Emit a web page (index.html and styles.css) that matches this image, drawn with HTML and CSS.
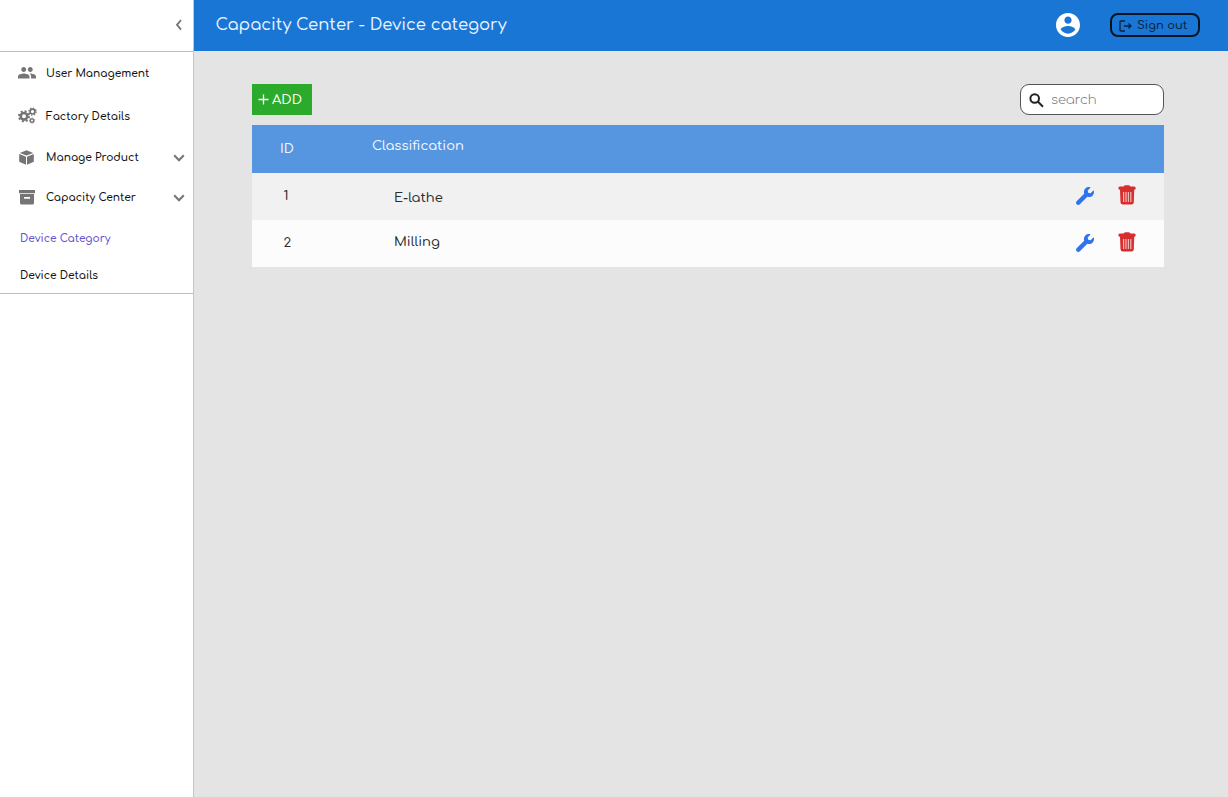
FILE: index.html
```html
<!DOCTYPE html>
<html lang="en">
<head>
<meta charset="utf-8">
<title>Capacity Center - Device category</title>
<link rel="stylesheet" href="styles.css">
</head>
<body>
<svg class="defs" width="0" height="0">
  <symbol id="wrench" viewBox="0 0 512 512"><path d="M507.73 109.1c-2.24-9.03-13.54-12.09-20.12-5.51l-74.36 74.36-67.88-11.31-11.31-67.88 74.36-74.36c6.62-6.62 3.43-17.9-5.66-20.16-47.38-11.74-99.55.91-136.58 37.93-39.64 39.64-50.55 97.1-34.05 147.2L18.74 402.76c-24.99 24.99-24.99 65.51 0 90.5 24.99 24.99 65.51 24.99 90.5 0l213.21-213.21c50.12 16.71 107.47 5.68 147.37-34.22 37.07-37.07 49.7-89.32 37.91-136.73z"/></symbol>
  <symbol id="trash" viewBox="0 0 18 20"><path d="M1.800 1.500H5.500Q6.500.3 7.500.3h3q1 0 2 1.200h3.700q1.500 0 1.500 1.500T16.200 4.900L15.800 17.300q0 2.200-2.200 2.200H4.800Q2.600 19.500 2.500 17.300L2 4.900Q.3 4.500.3 3T1.800 1.500z"/><path class="slots" d="M5.600 7v10M8 7v10M10.400 7v10M12.800 7v10"/></symbol>
  <symbol id="chevron" viewBox="0 0 12 8"><path d="M1.200 1.200 6 6.300 10.800 1.200"/></symbol>
</svg>
<div class="app">
  <aside class="sidebar">
    <div class="side-head"><svg class="collapse" viewBox="0 0 8 12"><path d="M6 1 2 5.800 6 10.600"/></svg></div>
    <nav class="nav">
      <a class="item users">
        <svg class="icon people" viewBox="1 5 22 14"><path d="M16 11c1.660 0 2.990-1.340 2.990-3S17.660 5 16 5c-1.660 0-3 1.340-3 3s1.340 3 3 3zm-8 0c1.660 0 2.990-1.340 2.990-3S9.660 5 8 5C6.340 5 5 6.340 5 8s1.340 3 3 3zm0 2c-2.330 0-7 1.170-7 3.500V19h14v-2.500c0-2.330-4.670-3.500-7-3.500zm8 0c-.29 0-.62.02-.97.05 1.160.84 1.970 1.970 1.970 3.450V19h6v-2.500c0-2.330-4.670-3.500-7-3.500z"/></svg>
        <span>User Management</span>
      </a>
      <a class="item factory">
        <svg class="icon gears" viewBox="0 0 19 17"><g><circle cx="6" cy="9.300" r="3.300" stroke-width="2.600"/><circle cx="6" cy="9.300" r="5.100" stroke-width="1.900" stroke-dasharray="2 2.005"/><circle cx="14.500" cy="4.600" r="2.400" stroke-width="1.700"/><circle cx="14.500" cy="4.600" r="3.600" stroke-width="1.300" stroke-dasharray="1.400 1.427"/><circle cx="14" cy="13.600" r="1.700" stroke-width="1.400"/><circle cx="14" cy="13.600" r="2.600" stroke-width="1" stroke-dasharray="1.150 1.184"/></g></svg>
        <span>Factory Details</span>
      </a>
      <a class="item product">
        <svg class="icon cube" viewBox="0 0 15 15"><path d="M7.500.2 14.200 2.900 7.500 5.600.8 2.900zM.2 4 7 6.700v8L.2 11.800zM14.800 4 8 6.700v8l6.800-2.900z"/></svg>
        <span>Manage Product</span>
        <svg class="chev"><use href="#chevron"/></svg>
      </a>
      <a class="item capacity">
        <svg class="icon box" viewBox="0 0 16 15"><path fill-rule="evenodd" d="M0 0h16v3.200H0zM1 4h14v9q0 1.500-1.500 1.500h-11Q1 14.500 1 13zM5 7v1.700h6V7z"/></svg>
        <span>Capacity Center</span>
        <svg class="chev"><use href="#chevron"/></svg>
      </a>
      <a class="sub active"><span>Device Category</span></a>
      <a class="sub details"><span>Device Details</span></a>
    </nav>
  </aside>
  <div class="page">
    <header class="topbar">
      <h1>Capacity Center - Device category</h1>
      <svg class="avatar" viewBox="2 2 20 20"><path d="M12 2C6.480 2 2 6.480 2 12s4.480 10 10 10 10-4.480 10-10S17.520 2 12 2zm0 3c1.660 0 3 1.340 3 3s-1.340 3-3 3-3-1.340-3-3 1.340-3 3-3zm0 14.200c-2.500 0-4.710-1.280-6-3.220.03-1.990 4-3.080 6-3.080 1.990 0 5.970 1.090 6 3.080-1.290 1.940-3.500 3.220-6 3.220z"/></svg>
      <button class="signout"><svg viewBox="0 0 13 12"><path d="M6 1H2Q1 1 1 2v8q0 1 1 1h4M4.800 6h7M9.500 3.600 12 6 9.500 8.400"/></svg><span>Sign out</span></button>
    </header>
    <main class="content">
      <div class="tools">
        <button class="add"><svg viewBox="0 0 11 11"><path d="M5.500.5v10M.5 5.500h10"/></svg><span>ADD</span></button>
        <label class="search"><svg viewBox="0 0 15 15"><circle cx="5.700" cy="5.500" r="4.300"/><path d="m9 8.800 5 5"/></svg><span>search</span></label>
      </div>
      <div class="table">
        <div class="row head"><span class="id">ID</span><span class="name">Classification</span></div>
        <div class="row first"><span class="id">1</span><span class="name">E-lathe</span><svg class="edit"><use href="#wrench"/></svg><svg class="delete"><use href="#trash"/></svg></div>
        <div class="row second"><span class="id">2</span><span class="name">Milling</span><svg class="edit"><use href="#wrench"/></svg><svg class="delete"><use href="#trash"/></svg></div>
      </div>
    </main>
  </div>
</div>
</body>
</html>
```
FILE: styles.css
```css
* { box-sizing: border-box; }
body { margin: 0; font-family: Comfortaa, Quicksand, Lato, sans-serif; color: #111; }
.defs { position: absolute; }
svg { display: block; flex: none; }
span, h1 { white-space: nowrap; }
button { font: inherit; }
.app { display: flex; width: 1228px; height: 797px; background: #e4e4e4; }

.sidebar { width: 194px; background: #fff; border-right: 1px solid #c5c5c5; }
.side-head { display: flex; justify-content: flex-end; height: 52px; padding: 19px 10px 0 0; border-bottom: 1px solid #bdbdbd; }
.collapse { width: 8px; height: 12px; fill: none; stroke: #757575; stroke-width: 1.800; }
.nav { height: 242px; border-bottom: 1px solid #bdbdbd; font-size: 10.650px; font-weight: 600; line-height: 16px; }
.item { display: grid; grid-template-columns: 28px 1fr 11px; align-items: center; padding: 0 9px 0 18px; }
.users { height: 42px; }
.users span, .factory span { padding-top: 2px; }
.factory { height: 43px; }
.product { height: 41px; }
.capacity { height: 40px; }
.capacity .icon, .capacity .chev { margin-top: -1px; }
.icon { fill: #757575; }
.people { width: 18px; height: 11.500px; }
.gears { width: 19px; height: 17px; fill: none; stroke: #757575; }
.cube { width: 15px; height: 15px; margin-left: 1px; }
.box { width: 16px; height: 15px; margin-left: 1px; }
.chev { width: 12px; height: 8px; margin-top: 1px; fill: none; stroke: #757575; stroke-width: 2; }
.product span { padding-top: 1px; }
.sub { display: flex; align-items: center; padding-left: 20px; }
.active { height: 39px; padding-top: 3px; color: #6653cf; }
.details { height: 35px; padding-top: 2px; }

.page { flex: 1; }
.topbar { display: flex; align-items: center; height: 51px; padding: 0 28px 0 21.500px; background: #1976d5; }
.topbar h1 { margin: 0 auto 2px 0; font-size: 16.400px; font-weight: 500; color: #e9f4ff; }
.avatar { width: 24px; height: 24px; margin: 0 30px 1px 0; fill: #fff; }
.signout { display: flex; align-items: center; gap: 5.500px; width: 90px; height: 24px; margin-bottom: 1px; padding: 1px 0 0 6.500px; border: 2px solid #071523; border-radius: 8px; background: transparent; font-size: 11.500px; font-weight: 600; color: #0a2441; }
.signout svg { width: 13px; height: 12px; fill: none; stroke: #0a2441; stroke-width: 1.400; }

.content { padding: 33px 64px 0 58px; }
.tools { display: flex; justify-content: space-between; height: 41px; }
.add { display: flex; align-items: center; gap: 3px; width: 60px; height: 31px; padding: 0 0 0 6px; border: 0; background: #2caa2c; font-size: 13.300px; font-weight: 500; color: #fff; }
.add svg { width: 11px; height: 11px; stroke: #fff; stroke-width: 1.300; }
.search { display: flex; align-items: center; gap: 7px; width: 144px; height: 31px; padding: 1px 0 0 8px; border: 1px solid #555; border-radius: 9px; background: #fff; font-size: 13.200px; font-weight: 300; color: #777; }
.search span { padding-bottom: 1px; }
.search svg { width: 15px; height: 15px; fill: none; stroke: #222; stroke-width: 2; }
.row { display: grid; grid-template-columns: 142px 1fr 42px 46px; align-items: center; height: 47px; font-size: 13.120px; font-weight: 500; line-height: 18px; color: #2b2b2b; }
.id { padding: 0 0 1px 31.500px; }
.head { height: 48px; background: #5695e0; color: #f3f8ff; }
.head .id { padding: 0 0 0 28px; }
.head .name { margin: 0 0 7px -22px; }
.first { background: #f1f1f1; }
.first .name { padding-top: 2px; }
.second { background: #fcfcfc; }
.second .name { padding-bottom: 4px; }
.edit { width: 18px; height: 18px; margin-bottom: 2px; fill: #3073ef; }
.delete { width: 18px; height: 20px; margin-bottom: 3px; fill: #d92e2e; }
.slots { fill: none; stroke: #fff; stroke-opacity: .65; stroke-width: 1.200; }
```
